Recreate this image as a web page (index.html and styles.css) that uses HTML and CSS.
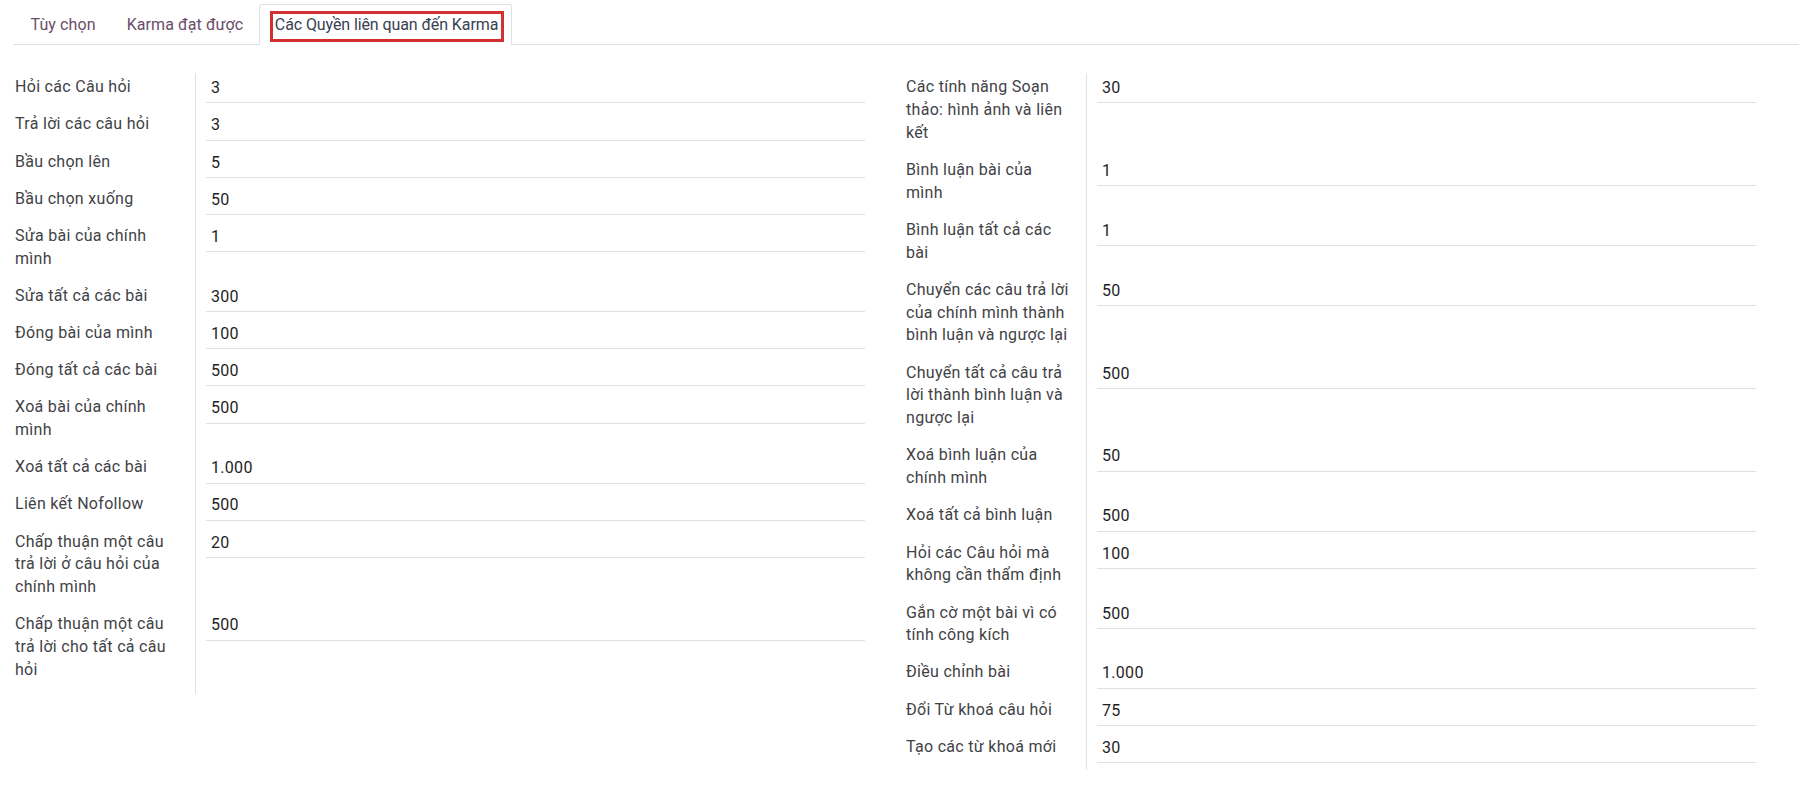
FILE: index.html
```html
<!DOCTYPE html>
<html lang="vi">
<head>
<meta charset="utf-8">
<title>Các Quyền liên quan đến Karma</title>
<link rel="stylesheet" href="styles.css">
</head>
<body>
<div class="page">
  <nav class="tabs">
    <a class="tab">Tùy chọn</a>
    <a class="tab">Karma đạt được</a>
    <a class="tab active"><span class="mark">Các Quyền liên quan đến Karma</span></a>
  </nav>
  <div class="groups">
    <div class="group">
      <div class="row"><div class="label">Hỏi các Câu hỏi</div><div class="cell"><div class="input">3</div></div></div>
      <div class="row"><div class="label">Trả lời các câu hỏi</div><div class="cell"><div class="input">3</div></div></div>
      <div class="row"><div class="label">Bầu chọn lên</div><div class="cell"><div class="input">5</div></div></div>
      <div class="row"><div class="label">Bầu chọn xuống</div><div class="cell"><div class="input">50</div></div></div>
      <div class="row"><div class="label">Sửa bài của chính mình</div><div class="cell"><div class="input">1</div></div></div>
      <div class="row"><div class="label">Sửa tất cả các bài</div><div class="cell"><div class="input">300</div></div></div>
      <div class="row"><div class="label">Đóng bài của mình</div><div class="cell"><div class="input">100</div></div></div>
      <div class="row"><div class="label">Đóng tất cả các bài</div><div class="cell"><div class="input">500</div></div></div>
      <div class="row"><div class="label">Xoá bài của chính mình</div><div class="cell"><div class="input">500</div></div></div>
      <div class="row"><div class="label">Xoá tất cả các bài</div><div class="cell"><div class="input">1.000</div></div></div>
      <div class="row"><div class="label">Liên kết Nofollow</div><div class="cell"><div class="input">500</div></div></div>
      <div class="row"><div class="label">Chấp thuận một câu trả lời ở câu hỏi của chính mình</div><div class="cell"><div class="input">20</div></div></div>
      <div class="row"><div class="label">Chấp thuận một câu trả lời cho tất cả câu hỏi</div><div class="cell"><div class="input">500</div></div></div>
    </div>
    <div class="group">
      <div class="row"><div class="label">Các tính năng Soạn thảo: hình ảnh và liên kết</div><div class="cell"><div class="input">30</div></div></div>
      <div class="row"><div class="label">Bình luận bài của mình</div><div class="cell"><div class="input">1</div></div></div>
      <div class="row"><div class="label">Bình luận tất cả các bài</div><div class="cell"><div class="input">1</div></div></div>
      <div class="row"><div class="label">Chuyển các câu trả lời của chính mình thành bình luận và ngược lại</div><div class="cell"><div class="input">50</div></div></div>
      <div class="row"><div class="label">Chuyển tất cả câu trả lời thành bình luận và ngược lại</div><div class="cell"><div class="input">500</div></div></div>
      <div class="row"><div class="label">Xoá bình luận của chính mình</div><div class="cell"><div class="input">50</div></div></div>
      <div class="row"><div class="label">Xoá tất cả bình luận</div><div class="cell"><div class="input">500</div></div></div>
      <div class="row"><div class="label">Hỏi các Câu hỏi mà không cần thẩm định</div><div class="cell"><div class="input">100</div></div></div>
      <div class="row"><div class="label">Gắn cờ một bài vì có tính công kích</div><div class="cell"><div class="input">500</div></div></div>
      <div class="row"><div class="label">Điều chỉnh bài</div><div class="cell"><div class="input">1.000</div></div></div>
      <div class="row"><div class="label">Đổi Từ khoá câu hỏi</div><div class="cell"><div class="input">75</div></div></div>
      <div class="row"><div class="label">Tạo các từ khoá mới</div><div class="cell"><div class="input">30</div></div></div>
    </div>
  </div>
</div>
</body>
</html>
```

FILE: styles.css
```css
html, body {
  margin: 0;
  padding: 0;
  background: #ffffff;
}
body {
  font-family: Roboto, "Noto Sans", "Liberation Sans", sans-serif;
  font-size: 16px;
  letter-spacing: 0.3px;
  line-height: 22.8px;
  color: #3f4246;
}
.page {
  width: 1786px;
  margin-left: 13px;
}
.tabs {
  display: flex;
  padding: 4px 0 0 2px;
  border-bottom: 1px solid #dee2e6;
  line-height: 23.3px;
  letter-spacing: 0.1px;
}
.tab {
  display: block;
  padding: 7.5px 14.5px 8px;
  border: 1px solid transparent;
  border-bottom: none;
  color: #6a4c68;
  margin-bottom: -1px;
  border-top-left-radius: 3px;
  border-top-right-radius: 3px;
}
.tab.active {
  border-color: #dee2e6;
  background: #ffffff;
  color: #374151;
  position: relative;
  padding: 7.5px 13px 9px 15px;
  letter-spacing: -0.1px;
}
.mark {
  position: relative;
}
.mark::after {
  content: "";
  position: absolute;
  left: -5px;
  right: -6px;
  top: -4px;
  bottom: -8px;
  border: 3px solid #d33033;
}
.groups {
  display: grid;
  grid-template-columns: 891px 891px;
  padding-left: 2px;
  margin-top: 28.7px;
}
.group {
  padding-right: 41px;
}
.row {
  display: flex;
}
.label {
  width: 164px;
  flex: 0 0 164px;
  padding: 2.7px 16px 11.7px 0;
  border-right: 1px solid #dee2e6;
  color: #3f4246;
}
.cell {
  flex: 1;
  padding-left: 10px;
}
.input {
  padding: 3.7px 5px 2.5px 5px;
  border-bottom: 1px solid #dee2e6;
  color: #1e1e1e;
}
```
